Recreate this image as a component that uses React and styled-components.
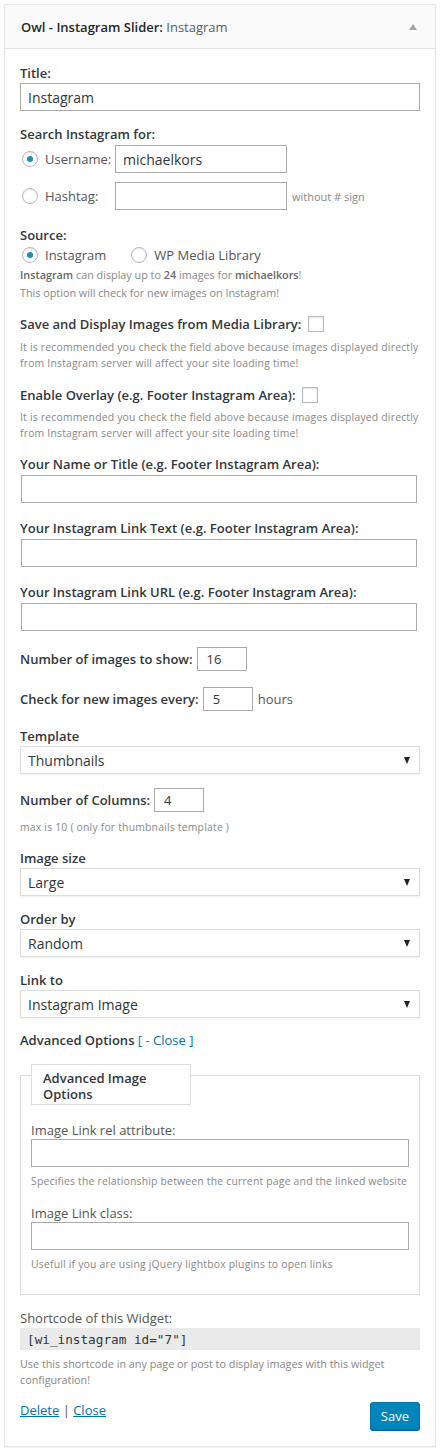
import React from 'react';
import styled, { createGlobalStyle } from 'styled-components';

const GlobalStyle = createGlobalStyle`
  body {
    margin: 0;
    background: #fff;
    font-family: "Open Sans", "Noto Sans", sans-serif;
    color: #444;
  }
  * { box-sizing: border-box; }
`;

const Page = styled.div`
  padding: 4px;
`;

const Widget = styled.div`
  border: 1px solid #e5e5e5;
  box-shadow: 0 1px 1px rgba(0, 0, 0, 0.04);
  background: #fff;
`;

const Header = styled.div`
  height: 44px;
  display: flex;
  align-items: center;
  justify-content: space-between;
  padding: 0 18px 0 16px;
  background: #fafafa;
  border-bottom: 1px solid #e5e5e5;
  font-size: 13px;
  color: #23282d;
`;

const HeaderTitle = styled.div`
  font-weight: 600;
  span {
    font-weight: 400;
    color: #555d66;
  }
`;

const UpArrow = styled.span`
  width: 0;
  height: 0;
  border-left: 4px solid transparent;
  border-right: 4px solid transparent;
  border-bottom: 6px solid #a0a5aa;
`;

const Body = styled.div`
  padding: 15px 15px 16px;
`;

const Label = styled.div`
  font-size: 13px;
  line-height: 18px;
  font-weight: ${(p) => (p.$normal ? 400 : 600)};
  color: ${(p) => (p.$normal ? '#555' : '#32373c')};
  margin-top: ${(p) => p.$mt || 0}px;
`;

const TextInput = styled.input`
  display: block;
  width: ${(p) => (p.$w ? `${p.$w}px` : '100%')};
  height: 28px;
  margin: ${(p) => p.$mt || 0}px 0 0 ${(p) => p.$ml || 0}px;
  padding: 0 7px;
  border: 1px solid #aaa;
  background: #fff;
  font-family: "Open Sans", sans-serif;
  font-size: 14px;
  color: #32373c;
  outline: none;
`;

const SmallInput = styled(TextInput)`
  display: inline-block;
  width: 50px;
  height: 24px;
  margin: 0 0 0 4px;
  padding: 0 9px;
  font-size: 13px;
`;

const Row = styled.div`
  display: flex;
  align-items: center;
  height: ${(p) => p.$h || 28}px;
  margin-top: ${(p) => p.$mt || 0}px;
  font-size: 13px;
  color: #555;
`;

const Radio = styled.span`
  width: 16px;
  height: 16px;
  border-radius: 50%;
  border: 1px solid #b4b9be;
  background: #fff;
  box-shadow: inset 0 1px 2px rgba(0, 0, 0, 0.1);
  display: inline-flex;
  align-items: center;
  justify-content: center;
  margin: 0 7px 0 ${(p) => p.$ml || 0}px;
  flex-shrink: 0;
  &::after {
    content: '';
    width: 6px;
    height: 6px;
    border-radius: 50%;
    background: ${(p) => (p.$checked ? '#1e8cbe' : 'transparent')};
  }
`;

const RadioText = styled.span`
  width: ${(p) => (p.$w ? `${p.$w}px` : 'auto')};
`;

const Hint = styled.span`
  font-size: ${(p) => (p.$big ? 13 : 11)}px;
  color: ${(p) => (p.$big ? '#555' : '#888')};
  margin-left: 5px;
`;

const Checkbox = styled.span`
  display: inline-block;
  vertical-align: middle;
  width: 16px;
  height: 16px;
  margin: -3px 0 0 3px;
  border: 1px solid #b4b9be;
  background: #fff;
  box-shadow: inset 0 1px 2px rgba(0, 0, 0, 0.1);
`;

const Desc = styled.div`
  font-size: ${(p) => p.$fs || 10.4}px;
  letter-spacing: ${(p) => (p.$fs ? 0 : 0.2)}px;
  line-height: ${(p) => p.$lh || 16}px;
  color: #888;
  margin-top: ${(p) => p.$mt || 0}px;
  b {
    font-weight: 600;
    color: #666;
  }
`;

const SelectBox = styled.div`
  display: flex;
  align-items: center;
  justify-content: space-between;
  height: 28px;
  margin-top: 1px;
  padding: 0 9px 0 7px;
  border: 1px solid #ddd;
  box-shadow: 0 1px 2px rgba(0, 0, 0, 0.07);
  background: #fff;
  font-size: 14px;
  color: #32373c;
`;

const DownArrow = styled.span`
  width: 0;
  height: 0;
  border-left: 3px solid transparent;
  border-right: 3px solid transparent;
  border-top: 7px solid #222;
`;

const Link = styled.a`
  color: #0073aa;
  font-weight: 400;
  text-decoration: ${(p) => (p.$underline ? 'underline' : 'none')};
  cursor: pointer;
`;

const Fieldset = styled.div`
  margin-top: 26px;
  border: 1px solid #ddd;
  padding: 0 10px 22px;
`;

const Legend = styled.div`
  width: 160px;
  margin: -12px 0 0 0;
  padding: 5px 11px 2px;
  border: 1px solid #ddd;
  background: #fff;
  font-size: 13px;
  line-height: 16px;
  font-weight: 600;
  color: #32373c;
`;

const Code = styled.div`
  height: 22px;
  margin-top: 1px;
  padding: 0 7px;
  display: flex;
  align-items: center;
  background: #eaeaea;
  font-family: "DejaVu Sans Mono", "Liberation Mono", monospace;
  font-size: 12.7px;
  color: #32373c;
`;

const Footer = styled.div`
  display: flex;
  justify-content: space-between;
  align-items: flex-start;
  margin-top: 13px;
  font-size: 13px;
  line-height: 18px;
  color: #555;
`;

const SaveButton = styled.button`
  height: 28px;
  margin-top: 1px;
  padding: 0 10px;
  border: 1px solid #0073aa;
  border-radius: 3px;
  background: #0085ba;
  box-shadow: 0 1px 0 #006799;
  color: #fff;
  font-family: "Open Sans", sans-serif;
  font-size: 13px;
  cursor: pointer;
`;

const Select = ({ value }) => (
  <SelectBox>
    <span>{value}</span>
    <DownArrow />
  </SelectBox>
);

export default function App() {
  return (
    <Page>
      <GlobalStyle />
      <Widget>
        <Header>
          <HeaderTitle>
            Owl - Instagram Slider: <span>Instagram</span>
          </HeaderTitle>
          <UpArrow />
        </Header>
        <Body>
          <Label>Title:</Label>
          <TextInput $mt={1} defaultValue="Instagram" />

          <Label $mt={14}>Search Instagram for:</Label>
          <Row $mt={2}>
            <Radio $ml={2} $checked />
            <RadioText $w={70}>Username:</RadioText>
            <TextInput $w={172} defaultValue="michaelkors" />
          </Row>
          <Row $mt={9}>
            <Radio $ml={2} />
            <RadioText $w={70}>Hashtag:</RadioText>
            <TextInput $w={172} />
            <Hint>without # sign</Hint>
          </Row>

          <Label $mt={16}>Source:</Label>
          <Row $h={18} $mt={2}>
            <Radio $ml={2} $checked />
            <RadioText>Instagram</RadioText>
            <Radio $ml={25} />
            <RadioText>WP Media Library</RadioText>
          </Row>
          <Desc $fs={10.8} $lh={18} $mt={2}>
            <b>Instagram</b> can display up to <b>24</b> images for <b>michaelkors</b>!
            <br />
            This option will check for new images on Instagram!
          </Desc>

          <Label $mt={13}>
            Save and Display Images from Media Library: <Checkbox />
          </Label>
          <Desc $mt={6}>
            It is recommended you check the field above because images displayed directly from
            Instagram server will affect your site loading time!
          </Desc>

          <Label $mt={15}>
            Enable Overlay (e.g. Footer Instagram Area): <Checkbox />
          </Label>
          <Desc $mt={5}>
            It is recommended you check the field above because images displayed directly from
            Instagram server will affect your site loading time!
          </Desc>

          <Label $mt={14}>Your Name or Title (e.g. Footer Instagram Area):</Label>
          <TextInput $mt={2} $ml={1} $w={396} />
          <Label $mt={16}>Your Instagram Link Text (e.g. Footer Instagram Area):</Label>
          <TextInput $mt={2} $ml={1} $w={396} />
          <Label $mt={16}>Your Instagram Link URL (e.g. Footer Instagram Area):</Label>
          <TextInput $mt={2} $ml={1} $w={396} />

          <Row $h={24} $mt={16}>
            <Label as="span">Number of images to show:</Label>
            <SmallInput defaultValue="16" />
          </Row>
          <Row $h={24} $mt={16}>
            <Label as="span">Check for new images every:</Label>
            <SmallInput defaultValue="5" />
            <Hint $big>hours</Hint>
          </Row>

          <Label $mt={16}>Template</Label>
          <Select value="Thumbnails" />

          <Row $h={24} $mt={14}>
            <Label as="span">Number of Columns:</Label>
            <SmallInput defaultValue="4" />
          </Row>
          <Desc $mt={7}>max is 10 ( only for thumbnails template )</Desc>

          <Label $mt={14}>Image size</Label>
          <Select value="Large" />
          <Label $mt={14}>Order by</Label>
          <Select value="Random" />
          <Label $mt={14}>Link to</Label>
          <Select value="Instagram Image" />

          <Label $mt={13}>
            Advanced Options <Link>[ - Close ]</Link>
          </Label>

          <Fieldset>
            <Legend>Advanced Image Options</Legend>
            <Label $normal $mt={16}>Image Link rel attribute:</Label>
            <TextInput />
            <Desc $mt={6}>Specifies the relationship between the current page and the linked website</Desc>
            <Label $normal $mt={15}>Image Link class:</Label>
            <TextInput />
            <Desc $mt={6}>Usefull if you are using jQuery lightbox plugins to open links</Desc>
          </Fieldset>

          <Label $normal $mt={14}>Shortcode of this Widget:</Label>
          <Code>[wi_instagram id="7"]</Code>
          <Desc $fs={10.8} $mt={6}>
            Use this shortcode in any page or post to display images with this widget
            configuration!
          </Desc>

          <Footer>
            <div>
              <Link $underline>Delete</Link> | <Link $underline>Close</Link>
            </div>
            <SaveButton>Save</SaveButton>
          </Footer>
        </Body>
      </Widget>
    </Page>
  );
}
